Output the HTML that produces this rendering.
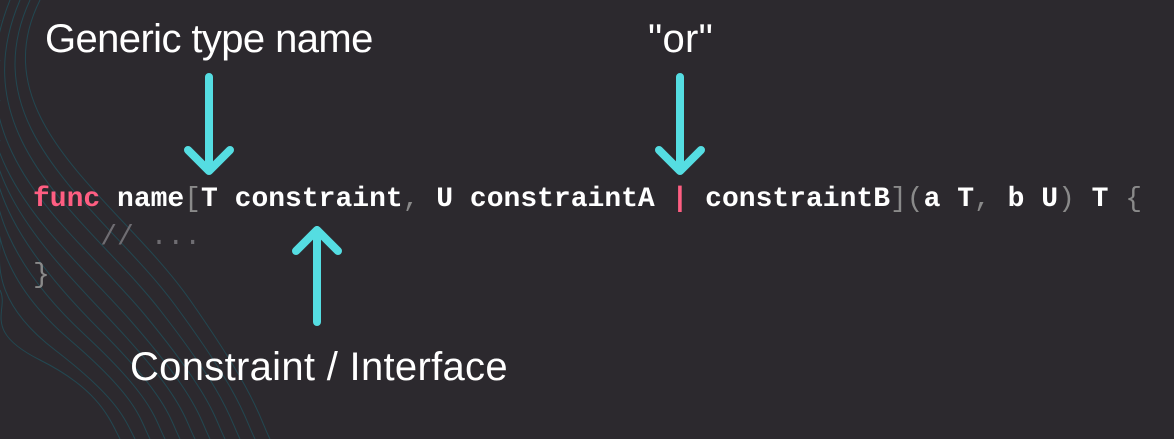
<!DOCTYPE html>
<html><head><style>
body{margin:0;width:1174px;height:439px;background:#2c292e;overflow:hidden;position:relative;font-family:"Liberation Sans",sans-serif}
.lbl{position:absolute;color:#fff;font-size:40px;white-space:nowrap;letter-spacing:0.3px}
.code{position:absolute;left:33px;font-family:"Liberation Mono",monospace;font-weight:bold;font-size:28px;color:#fff;white-space:pre;line-height:38px}
.k{color:#ff5e82}.g{color:#8a8a8a;font-weight:normal}.c{color:#6f6d72;font-weight:normal}
</style></head><body>
<svg width="1174" height="439" style="position:absolute;left:0;top:0">
<g fill="none" stroke="#1f5560" stroke-width="1" opacity="0.7">
<path d="M40 0 C-20 120 120 200 190 300 S260 420 270 439"/>
<path d="M30 0 C-30 130 105 210 175 305 S245 420 255 439"/>
<path d="M20 0 C-40 140 90 220 160 310 S230 420 240 439"/>
<path d="M10 0 C-50 150 75 230 145 315 S215 420 225 439"/>
<path d="M0 20 C-50 160 60 240 130 320 S200 420 210 439"/>
<path d="M0 60 C-40 170 45 250 115 325 S185 420 195 439"/>
<path d="M0 100 C-30 180 30 260 100 330 S170 420 180 439"/>
<path d="M0 140 C-20 200 15 270 85 335 S155 420 165 439"/>
<path d="M0 190 C-10 220 0 280 70 340 S140 420 150 439"/>
<path d="M0 240 C0 260 -10 300 55 350 S125 420 135 439"/>
<path d="M0 290 C10 310 -20 330 40 360 S110 420 120 439"/>
</g>
<g stroke="#55dde2" stroke-width="8" stroke-linecap="round" stroke-linejoin="round" fill="none">
<path d="M209 77 V170 M188 150 L209 171 L230 150"/>
<path d="M680 77 V170 M659 150 L680 171 L701 150"/>
<path d="M317 322 V230 M296 251 L317 230 L338 251"/>
</g>
</svg>
<div class="lbl" style="left:45px;top:17px;letter-spacing:-0.6px">Generic type name</div>
<div class="lbl" style="left:648px;top:17px">"or"</div>
<div class="lbl" style="left:130px;top:345px">Constraint / Interface</div>
<div class="code" style="top:181px"><span class="k">func</span> name<span class="g">[</span>T constraint<span class="g">,</span> U constraintA <span class="k">|</span> constraintB<span class="g">](</span>a T<span class="g">,</span> b U<span class="g">)</span> T <span class="g">{</span>
<span class="c">    // ...</span>
<span class="g">}</span></div>
</body></html>
